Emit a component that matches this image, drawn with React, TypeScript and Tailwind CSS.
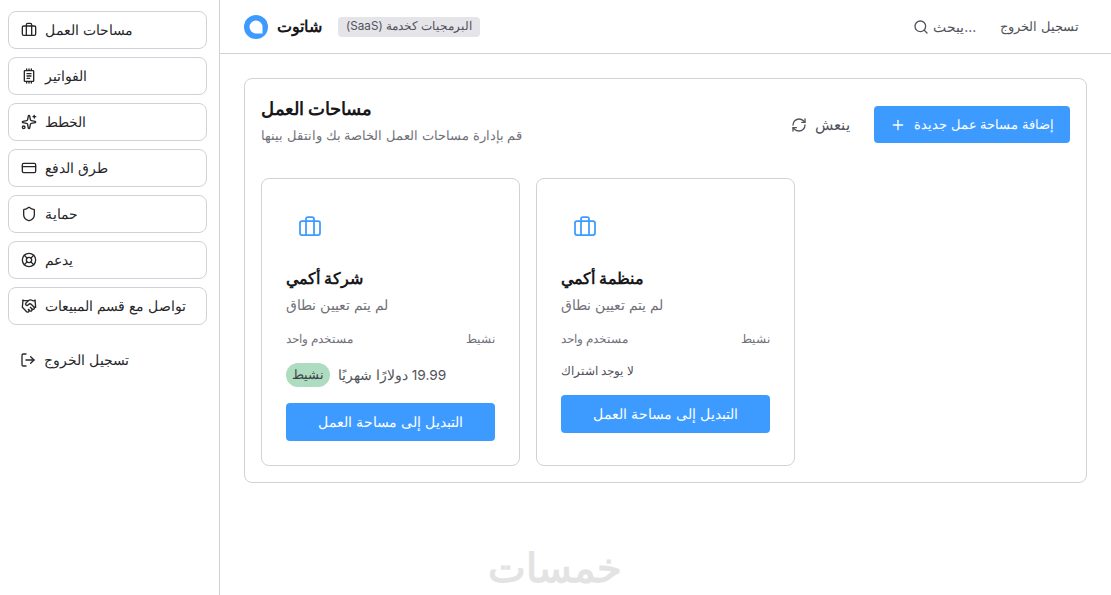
import { Briefcase, Sparkles, CreditCard, Shield, LifeBuoy, Handshake, LogOut, Search, RefreshCw, Plus } from 'lucide-react';

function InvoiceIcon({ className }: { className?: string }) {
    return (
        <svg viewBox="0 0 24 24" fill="none" stroke="currentColor" strokeWidth="2" strokeLinecap="round" className={className}>
            <rect x="5" y="4" width="14" height="16" rx="1" />
            <path d="M8.5 1.5v2M12 1.5v2M15.5 1.5v2M8.5 20.5v2M12 20.5v2M15.5 20.5v2" />
            <path d="M9 8.5h6M9 12h6M9 15.5h4" />
        </svg>
    );
}

const navItems = [
    { label: 'مساحات العمل', icon: Briefcase },
    { label: 'الفواتير', icon: InvoiceIcon },
    { label: 'الخطط', icon: Sparkles },
    { label: 'طرق الدفع', icon: CreditCard },
    { label: 'حماية', icon: Shield },
    { label: 'يدعم', icon: LifeBuoy },
    { label: 'تواصل مع قسم المبيعات', icon: Handshake },
];

function WorkspaceCard({ name, subscribed }: { name: string; subscribed: boolean }) {
    return (
        <div className="rounded-lg border border-[#d1d1d9] bg-white px-6 pt-[24px] flex flex-col">
            <div className="h-[48px] w-[48px] flex items-center justify-center">
                <Briefcase className="h-6 w-6 text-[#3d9bff]" strokeWidth={1.75} />
            </div>
            <h3 className="mt-[16px] text-[15.5px] leading-[24px] font-semibold text-[#18181b]">{name}</h3>
            <p className="mt-[2px] text-sm leading-[24px] text-[#71717a]">لم يتم تعيين نطاق</p>
            <div className="mt-[10px] flex justify-between text-xs leading-[24px] text-[#71717a]">
                <span>مستخدم واحد</span>
                <span>نشيط</span>
            </div>
            {subscribed ? (
                <div className="mt-[12px] flex items-center gap-2 h-[24px] text-[13.7px] text-[#52525b]">
                    <span className="rounded-full bg-[#aedcc0] px-[6px] h-[24px] flex items-center text-[13px] text-[#3f3f46]">نشيط</span>
                    <span dir="rtl">19.99 دولارًا شهريًا</span>
                </div>
            ) : (
                <div className="mt-[8px] text-xs leading-[24px] text-[#52525b]">لا يوجد اشتراك</div>
            )}
            <button className={`${subscribed ? 'mt-[16px]' : 'mt-[12px]'} h-[38px] rounded bg-[#3d9bff] text-[13.8px] text-white`}>التبديل إلى مساحة العمل</button>
        </div>
    );
}

export default function App() {
    return (
        <div className="flex h-[595px] w-[1111px] overflow-hidden bg-white font-['Inter','Noto_Sans',sans-serif] text-[#18181b]">
            <aside className="w-[220px] shrink-0 border-r border-[#d1d1d9] pl-2 pr-3 pt-[11px]">
                <nav className="flex flex-col gap-2">
                    {navItems.map((item) => (
                        <a key={item.label} className="flex h-[38px] items-center gap-[8px] rounded-lg border border-[#d1d1d9] px-3 text-sm text-[#27272a]">
                            <item.icon className="h-4 w-4" />
                            <span>{item.label}</span>
                        </a>
                    ))}
                </nav>
                <a className="mt-[16px] flex h-[38px] items-center gap-[8px] px-3 text-[13.5px] text-[#27272a]">
                    <LogOut className="h-4 w-4" />
                    <span>تسجيل الخروج</span>
                </a>
            </aside>
            <div className="flex-1 flex flex-col relative">
                <header className="flex h-[54px] items-center justify-between border-b border-[#d1d1d9] pl-6 pr-8">
                    <div className="flex items-center">
                        <svg viewBox="0 0 24 24" className="h-6 w-6">
                            <circle cx="12" cy="12" r="12" fill="#3d9bff" />
                            <path d="M12 5.5a6.5 6.5 0 0 1 6.5 6.5v6.5H12a6.5 6.5 0 0 1 0-13z" fill="#fff" />
                        </svg>
                        <span className="ml-[9px] text-[15.5px] font-semibold">شاتوت</span>
                        <span dir="rtl" className="ml-4 rounded bg-[#e4e4e9] px-2 h-[20px] flex items-center text-[11.7px] text-[#52525b]">البرمجيات كخدمة (SaaS)</span>
                    </div>
                    <div className="flex items-center gap-6 text-[13px] text-[#52525b]">
                        <div className="flex items-center gap-1">
                            <Search className="h-4 w-4" />
                            <span className="text-sm">يبحث...</span>
                        </div>
                        <span>تسجيل الخروج</span>
                    </div>
                </header>
                <main className="px-6 pt-6">
                    <section className="rounded-lg border border-[#d1d1d9] px-4 pt-4 h-[405px]">
                        <div className="flex items-start justify-between h-[59px]">
                            <div>
                                <h2 className="text-[17.5px] font-semibold leading-[28px]">مساحات العمل</h2>
                                <p className="text-[13.35px] leading-[24px] text-[#71717a]">قم بإدارة مساحات العمل الخاصة بك وانتقل بينها</p>
                            </div>
                            <div className="flex items-center gap-6 pt-[11px]">
                                <button className="flex items-center gap-2 text-[14.5px] text-[#52525b]">
                                    <RefreshCw className="h-4 w-4" />
                                    <span>ينعش</span>
                                </button>
                                <button className="flex h-[37px] items-center gap-2 rounded bg-[#3d9bff] px-4 text-[13.3px] text-white">
                                    <Plus className="h-4 w-4" />
                                    <span>إضافة مساحة عمل جديدة</span>
                                </button>
                            </div>
                        </div>
                        <div className="mt-6 grid grid-cols-3 gap-4 h-[288px]">
                            <WorkspaceCard name="شركة أكمي" subscribed />
                            <WorkspaceCard name="منظمة أكمي" subscribed={false} />
                        </div>
                    </section>
                </main>
                <div className="absolute bottom-[2px] left-[268px] text-[40px] leading-[50px] font-bold text-[#e3e3e3]">خمسات</div>
            </div>
        </div>
    );
}
